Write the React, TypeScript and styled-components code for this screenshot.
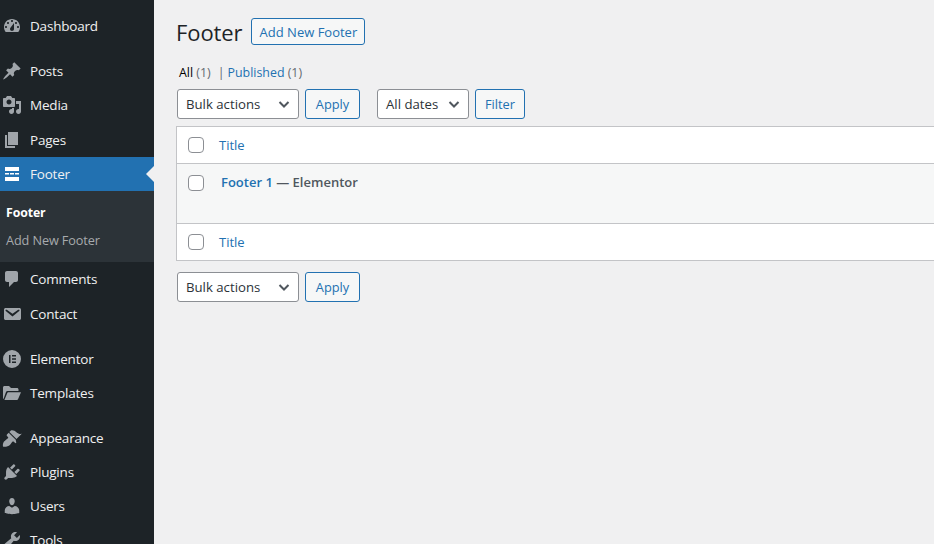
import React from "react";
import styled, { createGlobalStyle } from "styled-components";

const Global = createGlobalStyle`
  html, body { margin: 0; padding: 0; background: #f0f0f1; }
  body { font-family: "Open Sans", "Noto Sans", "Liberation Sans", sans-serif; font-size: 13.5px; }
  #root { width: 934px; height: 544px; overflow: hidden; }
`;

const Page = styled.div`
  display: flex;
  width: 934px;
  height: 544px;
  overflow: hidden;
  background: #f0f0f1;
`;

const Sidebar = styled.nav`
  flex: 0 0 154px;
  height: 544px;
  overflow: hidden;
  background: #1d2327;
  padding-top: 9px;
  box-sizing: border-box;
`;

const MenuItem = styled.div<{ $active?: boolean; $gap?: number }>`
  position: relative;
  display: flex;
  align-items: center;
  height: 34.3px;
  margin-top: ${(p) => p.$gap ?? 0}px;
  color: #f0f0f1;
  background: ${(p) => (p.$active ? "#2271b1" : "transparent")};
  font-size: 13.5px;
  letter-spacing: -0.2px;
`;

const IconSlot = styled.span<{ $active?: boolean }>`
  flex: 0 0 30px;
  display: flex;
  justify-content: center;
  padding-right: 6px;
  box-sizing: border-box;
  color: ${(p) => (p.$active ? "#fff" : "#a0a5aa")};
`;

const Notch = styled.span`
  position: absolute;
  right: 0;
  top: 9px;
  width: 0;
  height: 0;
  border: 8px solid transparent;
  border-left: 0;
  border-right-color: #f0f0f1;
`;

const Submenu = styled.div`
  height: 71px;
  background: #2c3338;
  padding-top: 8px;
  box-sizing: border-box;
`;

const SubItem = styled.div<{ $current?: boolean }>`
  height: 27px;
  line-height: 28px;
  padding-left: 6px;
  font-size: ${(p) => (p.$current ? "12.3px" : "12.7px")};
  letter-spacing: -0.1px;
  color: ${(p) => (p.$current ? "#fff" : "#a7aaad")};
  font-weight: ${(p) => (p.$current ? 700 : 400)};
`;

const Main = styled.main`
  flex: 1;
  min-width: 0;
  padding: 18px 0 0 22px;
  box-sizing: border-box;
  overflow: hidden;
`;

const Heading = styled.div`
  display: flex;
  align-items: center;
  gap: 9px;
  height: 27px;
`;

const Title = styled.h1`
  margin: 0;
  font-size: 22px;
  font-weight: 400;
  color: #1d2327;
  letter-spacing: -0.1px;
`;

const OutlineButton = styled.button`
  height: 27px;
  width: 114px;
  padding: 0;
  border: 1px solid #2271b1;
  border-radius: 3px;
  background: #f6f7f7;
  color: #2271b1;
  font: inherit;
  font-size: 13px;
`;

const Tabs = styled.div`
  display: flex;
  align-items: center;
  height: 20px;
  margin-top: 17px;
  padding-left: 3px;
  font-size: 12.4px;
  color: #646970;
  white-space: pre;
`;

const CurrentTab = styled.span`
  color: #000;
`;

const TabSeparator = styled.span`
  margin: 0 3px 0 7px;
  color: #646970;
`;

const TabLink = styled.span`
  color: #2271b1;
`;

const Toolbar = styled.div<{ $top: number }>`
  display: flex;
  align-items: center;
  height: 30px;
  margin-top: ${(p) => p.$top}px;
  padding-left: 1px;
`;

const SelectBox = styled.div<{ $w: number; $left?: number }>`
  display: flex;
  align-items: center;
  justify-content: space-between;
  width: ${(p) => p.$w}px;
  height: 30px;
  margin-left: ${(p) => p.$left ?? 0}px;
  padding: 0 6px 0 8px;
  box-sizing: border-box;
  border: 1px solid #8c8f94;
  border-radius: 3px;
  background: #fff;
  color: #2c3338;
  font-size: 13.2px;
`;

const ActionButton = styled.button<{ $w: number; $left: number }>`
  width: ${(p) => p.$w}px;
  height: 30px;
  margin-left: ${(p) => p.$left}px;
  padding: 0;
  border: 1px solid #2271b1;
  border-radius: 3px;
  background: #f6f7f7;
  color: #2271b1;
  font: inherit;
  font-size: 12.8px;
`;

const Table = styled.div`
  width: 800px;
  margin-top: 7px;
  border: 1px solid #c3c4c7;
  background: #fff;
`;

const Row = styled.div<{ $h: number; $alt?: boolean; $border?: boolean; $start?: boolean }>`
  display: flex;
  align-items: ${(p) => (p.$start ? "flex-start" : "center")};
  height: ${(p) => p.$h}px;
  box-sizing: border-box;
  padding-left: 11px;
  background: ${(p) => (p.$alt ? "#f6f7f7" : "#fff")};
  border-bottom: ${(p) => (p.$border ? "1px solid #c3c4c7" : "0")};
`;

const Check = styled.span<{ $top?: number }>`
  flex: 0 0 16px;
  height: 16px;
  box-sizing: border-box;
  margin-top: ${(p) => p.$top ?? 0}px;
  border: 1px solid #8c8f94;
  border-radius: 4px;
  background: #fff;
`;

const HeadLink = styled.span`
  margin-left: 15px;
  color: #2271b1;
  font-size: 13px;
`;

const RowTitle = styled.span`
  margin: 9px 0 0 17px;
  color: #50575e;
  font-size: 13px;
  font-weight: 600;
`;

const RowLink = styled.span`
  color: #2271b1;
`;

const P = ({ d }: { d: string }) => (
  <svg width="20" height="20" viewBox="0 0 20 20" fill="currentColor" aria-hidden="true">
    <path d={d} fillRule="evenodd" />
  </svg>
);

const icons: Record<string, string> = {
  dashboard:
    "M3.76 16h12.48c1.1-1.37 1.76-3.11 1.76-5 0-4.42-3.58-8-8-8s-8 3.58-8 8c0 1.89.66 3.63 1.76 5zM10 4c.55 0 1 .45 1 1s-.45 1-1 1-1-.45-1-1 .45-1 1-1zM6 6c.55 0 1 .45 1 1s-.45 1-1 1-1-.45-1-1 .45-1 1-1zm8 0c.55 0 1 .45 1 1s-.45 1-1 1-1-.45-1-1 .45-1 1-1zm-5.37 5.55L12 7v6c0 1.1-.9 2-2 2s-2-.9-2-2c0-.57.24-1.08.63-1.45zM4 10c.55 0 1 .45 1 1s-.45 1-1 1-1-.45-1-1 .45-1 1-1zm12 0c.55 0 1 .45 1 1s-.45 1-1 1-1-.45-1-1 .45-1 1-1z",
  pin: "M10.44 3.02l1.82-1.82 6.36 6.35-1.83 1.82c-1.05-.68-2.48-.57-3.41.36l-.75.75c-.92.93-1.04 2.35-.35 3.41l-1.83 1.82-2.41-2.41-2.8 2.79c-.42.42-3.38 2.71-3.8 2.29s1.86-3.39 2.28-3.81l2.79-2.79L4.1 9.36l1.83-1.82c1.05.69 2.48.57 3.4-.36l.75-.75c.93-.92 1.05-2.35.36-3.41z",
  media:
    "M13 11V4c0-.55-.45-1-1-1h-1.67L9 1H5L3.67 3H2c-.55 0-1 .45-1 1v7c0 .55.45 1 1 1h10c.55 0 1-.45 1-1zM7 4.5c1.38 0 2.5 1.12 2.5 2.5S8.38 9.5 7 9.5 4.5 8.38 4.5 7 5.62 4.5 7 4.5zM14 6h5v10.5c0 1.38-1.12 2.5-2.5 2.5S14 17.88 14 16.5s1.12-2.5 2.5-2.5c.17 0 .34.02.5.05V9h-3V6zm-4 8.05V13h2v3.5c0 1.38-1.12 2.5-2.5 2.5S7 17.88 7 16.5 8.12 14 9.5 14c.17 0 .34.02.5.05z",
  pages: "M6 15V2h10v13H6zm-1 1h8v2H3V5h2v11z",
  footer: "M3 3h14v4H3zM3 9h4v1.5H3zM8 9h4v1.5H8zM13 9h4v1.5h-4zM3 13h14v4H3z",
  comment:
    "M5 2h9c1.1 0 2 .9 2 2v7c0 1.1-.9 2-2 2h-2l-5 5v-5H5c-1.1 0-2-.9-2-2V4c0-1.1.9-2 2-2z",
  email:
    "M3.87 4h13.25C18.37 4 19 4.59 19 5.79v8.42c0 1.19-.63 1.79-1.88 1.79H3.87c-1.25 0-1.88-.6-1.88-1.79V5.79c0-1.2.63-1.79 1.88-1.79zm6.62 8.6l6.74-5.53c.24-.2.43-.66.13-1.07-.29-.41-.82-.42-1.17-.17l-5.7 3.86L4.8 5.83c-.35-.25-.88-.24-1.17.17-.3.41-.11.87.13 1.07z",
  elementor:
    "M10 1a9 9 0 1 0 0 18 9 9 0 0 0 0-18zM7 6h1.5v8H7zM10 6h4v1.5h-4zM10 9.25h4v1.5h-4zM10 12.5h4V14h-4z",
  folder:
    "M1 16V4.5C1 3.7 1.7 3 2.5 3H7l2 2h6c.8 0 1.5.7 1.5 1.5V8H5.5c-.7 0-1.2.4-1.5 1L1.7 15.5 1 16zm1.4 1l3-7.2c.1-.3.4-.5.7-.5H19l-3 7c-.2.4-.6.7-1 .7H2.4z",
  brush:
    "M14.48 11.06L7.41 3.99l1.5-1.5c.5-.56 2.3-.47 3.51.32 1.21.8 1.43 1.28 2.91 2.1 1.18.64 2.45 1.26 4.45.85zm-.71.71L6.7 4.7 4.93 6.47c-.39.39-.39 1.02 0 1.41l1.06 1.06c.39.39.39 1.03 0 1.42-.6.6-1.43 1.11-2.21 1.69-.35.26-.7.53-1.01.84C1.43 13.23.5 16.5 1.08 18.6c.03.03.06.06.08.09 2.1.5 5.37-.35 6.71-1.68.31-.31.58-.66.84-1.01.58-.78 1.09-1.61 1.69-2.21.39-.39 1.03-.39 1.42 0l1.06 1.06c.39.39 1.02.39 1.41 0z",
  plugin:
    "M13.11 4.36L9.87 7.6 8 5.73l3.24-3.24c.35-.34 1.05-.2 1.56.32.52.51.66 1.21.31 1.55zm-8 1.77l.91-1.12 9.01 9.01-1.19.84c-.71.71-2.63 1.16-3.82 1.16H6.14L4.9 17.26c-.59.59-1.54.59-2.12 0-.59-.58-.59-1.53 0-2.12l1.24-1.24v-3.88c0-1.13.4-3.19 1.09-3.89zm7.26 3.97l3.24-3.24c.34-.35 1.04-.21 1.55.31.52.51.66 1.21.31 1.55l-3.24 3.25z",
  user: "M10 9.25c-2.27 0-2.73-3.44-2.73-3.44C7 4.02 7.82 2 9.97 2c2.16 0 2.98 2.02 2.71 3.81 0 0-.41 3.44-2.68 3.44zm0 2.57L12.72 10c2.39 0 4.52 2.33 4.52 4.53v2.49s-3.65 1.13-7.24 1.13c-3.65 0-7.24-1.13-7.24-1.13v-2.49c0-2.25 1.94-4.48 4.47-4.48z",
  tools:
    "M16.68 9.77c-1.34 1.34-3.3 1.67-4.95.99l-5.41 6.52c-.99.99-2.59.99-3.58 0s-.99-2.59 0-3.57l6.52-5.42c-.68-1.65-.35-3.61.99-4.95 1.28-1.28 3.12-1.62 4.72-1.06l-2.89 2.89 2.82 2.82 2.86-2.87c.53 1.58.18 3.39-1.08 4.67zM3.81 16.21c.4.39 1.04.39 1.43 0 .4-.4.4-1.04 0-1.43-.39-.4-1.03-.4-1.43 0-.39.39-.39 1.03 0 1.43z",
};

const Chevron = () => (
  <svg width="16" height="16" viewBox="0 0 16 16" fill="none" stroke="#50575e" strokeWidth="2" aria-hidden="true">
    <path d="M3.5 6l4.5 4.5L12.5 6" />
  </svg>
);

type Item = { label: string; icon: string; gap?: number };
const before: Item[] = [
  { label: "Dashboard", icon: "dashboard" },
  { label: "Posts", icon: "pin", gap: 10.6 },
  { label: "Media", icon: "media" },
  { label: "Pages", icon: "pages" },
];
const after: Item[] = [
  { label: "Comments", icon: "comment" },
  { label: "Contact", icon: "email" },
  { label: "Elementor", icon: "elementor", gap: 10.9 },
  { label: "Templates", icon: "folder" },
  { label: "Appearance", icon: "brush", gap: 10.3 },
  { label: "Plugins", icon: "plugin" },
  { label: "Users", icon: "user" },
  { label: "Tools", icon: "tools" },
];

const Entry = ({ label, icon, gap }: Item) => (
  <MenuItem $gap={gap}>
    <IconSlot>
      <P d={icons[icon]} />
    </IconSlot>
    {label}
  </MenuItem>
);

const Bulk = () => (
  <SelectBox $w={122}>
    Bulk actions
    <Chevron />
  </SelectBox>
);

export default function App() {
  return (
    <Page>
      <Global />
      <Sidebar>
        {before.map((i) => (
          <Entry key={i.label} {...i} />
        ))}
        <MenuItem $active>
          <IconSlot $active>
            <P d={icons.footer} />
          </IconSlot>
          Footer
          <Notch />
        </MenuItem>
        <Submenu>
          <SubItem $current>Footer</SubItem>
          <SubItem>Add New Footer</SubItem>
        </Submenu>
        {after.map((i) => (
          <Entry key={i.label} {...i} />
        ))}
      </Sidebar>
      <Main>
        <Heading>
          <Title>Footer</Title>
          <OutlineButton>Add New Footer</OutlineButton>
        </Heading>
        <Tabs>
          <CurrentTab>All</CurrentTab> (1)
          <TabSeparator>|</TabSeparator>
          <TabLink>Published</TabLink> (1)
        </Tabs>
        <Toolbar $top={7}>
          <Bulk />
          <ActionButton $w={55} $left={6}>Apply</ActionButton>
          <SelectBox $w={92} $left={17}>
            All dates
            <Chevron />
          </SelectBox>
          <ActionButton $w={50} $left={6}>Filter</ActionButton>
        </Toolbar>
        <Table>
          <Row $h={37} $border>
            <Check />
            <HeadLink>Title</HeadLink>
          </Row>
          <Row $h={60} $alt $border $start>
            <Check $top={11} />
            <RowTitle>
              <RowLink>Footer 1</RowLink> — Elementor
            </RowTitle>
          </Row>
          <Row $h={36}>
            <Check />
            <HeadLink>Title</HeadLink>
          </Row>
        </Table>
        <Toolbar $top={11}>
          <Bulk />
          <ActionButton $w={55} $left={6}>Apply</ActionButton>
        </Toolbar>
      </Main>
    </Page>
  );
}
